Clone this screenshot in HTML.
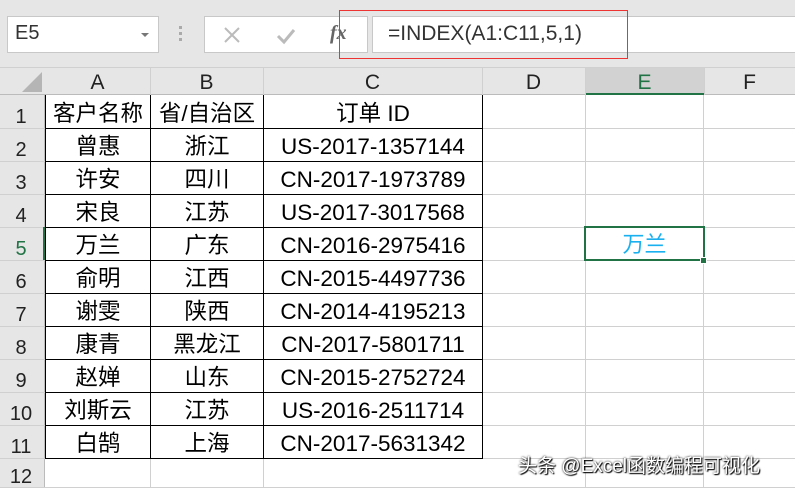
<!DOCTYPE html>
<html><head><meta charset="utf-8"><style>
*{margin:0;padding:0;box-sizing:border-box}
body{width:795px;height:488px;overflow:hidden;background:#fff;position:relative;font-family:"Liberation Sans","Noto Sans CJK SC",sans-serif}
.a{position:absolute}
.top{left:0;top:0;width:795px;height:68px;background:#e6e6e6;border-bottom:1px solid #d0d0d0}
.box{background:#fff;border:1px solid #c8c8c8}
.hl{background:#d0d0d0}
.vl{background:#d0d0d0}
.ch{color:#222;font-size:21px;text-align:center;top:71px}
.rh{color:#222;font-size:20px;left:0;width:42px;text-align:center}
td{padding-top:5px}
</style></head><body>
<div class="a top"></div>
<div class="a box" style="left:7px;top:16px;width:152px;height:37px"></div>
<div class="a" style="left:15px;top:22px;font-size:20px;color:#333">E5</div>
<div class="a" style="left:141px;top:33px;width:0;height:0;border-left:4px solid transparent;border-right:4px solid transparent;border-top:4px solid #777"></div>
<div class="a" style="left:179px;top:26px;width:3px;height:3px;background:#aaa;box-shadow:0 6px #aaa,0 12px #aaa"></div>
<div class="a box" style="left:204px;top:16px;width:164px;height:37px"></div>
<svg class="a" style="left:222px;top:25px" width="20" height="20"><path d="M3 3L17 17M17 3L3 17" stroke="#bbb" stroke-width="2"/></svg>
<svg class="a" style="left:275px;top:26px" width="22" height="20"><path d="M3 10L9 16L19 4" stroke="#bbb" stroke-width="3" fill="none"/></svg>
<div class="a" style="left:330px;top:22px;font:italic bold 20px 'Liberation Serif',serif;color:#666">fx</div>
<div class="a box" style="left:372px;top:16px;width:430px;height:37px"></div>
<div class="a" style="left:388px;top:22px;font-size:21px;color:#333">=INDEX(A1:C11,5,1)</div>
<div class="a" style="left:339px;top:10px;width:289px;height:49px;border:1px solid #e33"></div>
<div class="a" style="left:0;top:68px;width:795px;height:27px;background:#e6e6e6;border-bottom:1px solid #bbb"></div>
<div class="a" style="left:0;top:95px;width:45px;height:393px;background:#e6e6e6;border-right:1px solid #bbb"></div>
<svg class="a" style="left:22px;top:72px" width="20" height="20"><path d="M20 0L20 20L0 20Z" fill="#b5b5b5"/></svg>
<div class="a" style="left:585px;top:68px;width:119px;height:27px;background:#d2d2d2;border-bottom:2px solid #217346"></div>
<div class="a ch" style="left:45px;width:105px">A</div>
<div class="a ch" style="left:150px;width:113px">B</div>
<div class="a ch" style="left:263px;width:219px">C</div>
<div class="a ch" style="left:482px;width:103px">D</div>
<div class="a ch" style="left:585px;width:119px;color:#217346">E</div>
<div class="a ch" style="left:704px;width:91px">F</div>
<div class="a vl" style="left:150px;top:68px;width:1px;height:27px"></div>
<div class="a vl" style="left:263px;top:68px;width:1px;height:27px"></div>
<div class="a vl" style="left:482px;top:68px;width:1px;height:27px"></div>
<div class="a vl" style="left:585px;top:68px;width:1px;height:27px"></div>
<div class="a vl" style="left:704px;top:68px;width:1px;height:27px"></div>
<div class="a vl" style="left:585px;top:95px;width:1px;height:393px"></div>
<div class="a vl" style="left:703px;top:95px;width:1px;height:393px"></div>
<div class="a vl" style="left:150px;top:458px;width:1px;height:30px"></div>
<div class="a vl" style="left:263px;top:458px;width:1px;height:30px"></div>
<div class="a hl" style="left:0;top:128px;width:795px;height:1px"></div>
<div class="a hl" style="left:0;top:161px;width:795px;height:1px"></div>
<div class="a hl" style="left:0;top:194px;width:795px;height:1px"></div>
<div class="a hl" style="left:0;top:227px;width:795px;height:1px"></div>
<div class="a hl" style="left:0;top:260px;width:795px;height:1px"></div>
<div class="a hl" style="left:0;top:293px;width:795px;height:1px"></div>
<div class="a hl" style="left:0;top:326px;width:795px;height:1px"></div>
<div class="a hl" style="left:0;top:359px;width:795px;height:1px"></div>
<div class="a hl" style="left:0;top:392px;width:795px;height:1px"></div>
<div class="a hl" style="left:0;top:425px;width:795px;height:1px"></div>
<div class="a hl" style="left:0;top:458px;width:795px;height:1px"></div>
<div class="a hl" style="left:0;top:487px;width:795px;height:1px"></div>
<table class="a" style="left:45px;top:95px;border-collapse:collapse;background:#fff;table-layout:fixed;width:437px">
<colgroup><col style="width:105px"><col style="width:113px"><col style="width:219px"></colgroup>
<tbody style="font-size:22.5px;text-align:center;line-height:1">
<tr style="height:33px"><td style="border:1px solid #000;border-top:none">客户名称</td><td style="border:1px solid #000;border-top:none">省/自治区</td><td style="border:1px solid #000;border-top:none">订单 ID</td></tr>
<tr style="height:33px"><td style="border:1px solid #000">曾惠</td><td style="border:1px solid #000">浙江</td><td style="border:1px solid #000">US-2017-1357144</td></tr>
<tr style="height:33px"><td style="border:1px solid #000">许安</td><td style="border:1px solid #000">四川</td><td style="border:1px solid #000">CN-2017-1973789</td></tr>
<tr style="height:33px"><td style="border:1px solid #000">宋良</td><td style="border:1px solid #000">江苏</td><td style="border:1px solid #000">US-2017-3017568</td></tr>
<tr style="height:33px"><td style="border:1px solid #000">万兰</td><td style="border:1px solid #000">广东</td><td style="border:1px solid #000">CN-2016-2975416</td></tr>
<tr style="height:33px"><td style="border:1px solid #000">俞明</td><td style="border:1px solid #000">江西</td><td style="border:1px solid #000">CN-2015-4497736</td></tr>
<tr style="height:33px"><td style="border:1px solid #000">谢雯</td><td style="border:1px solid #000">陕西</td><td style="border:1px solid #000">CN-2014-4195213</td></tr>
<tr style="height:33px"><td style="border:1px solid #000">康青</td><td style="border:1px solid #000">黑龙江</td><td style="border:1px solid #000">CN-2017-5801711</td></tr>
<tr style="height:33px"><td style="border:1px solid #000">赵婵</td><td style="border:1px solid #000">山东</td><td style="border:1px solid #000">CN-2015-2752724</td></tr>
<tr style="height:33px"><td style="border:1px solid #000">刘斯云</td><td style="border:1px solid #000">江苏</td><td style="border:1px solid #000">US-2016-2511714</td></tr>
<tr style="height:33px"><td style="border:1px solid #000">白鹄</td><td style="border:1px solid #000">上海</td><td style="border:1px solid #000">CN-2017-5631342</td></tr>
</tbody></table>
<div class="a rh" style="top:106px">1</div>
<div class="a rh" style="top:139px">2</div>
<div class="a rh" style="top:172px">3</div>
<div class="a rh" style="top:205px">4</div>
<div class="a rh" style="top:238px;color:#217346">5</div>
<div class="a" style="left:43px;top:227px;width:2px;height:33px;background:#217346"></div>
<div class="a rh" style="top:271px">6</div>
<div class="a rh" style="top:304px">7</div>
<div class="a rh" style="top:337px">8</div>
<div class="a rh" style="top:370px">9</div>
<div class="a rh" style="top:403px">10</div>
<div class="a rh" style="top:436px">11</div>
<div class="a rh" style="top:466px">12</div>
<div class="a" style="left:584px;top:226px;width:121px;height:35px;border:2px solid #217346;background:#fff;color:#1ab0f0;font-size:22px;text-align:center;line-height:33px">万兰</div>
<div class="a" style="left:700px;top:257px;width:7px;height:7px;background:#217346;border:1px solid #fff"></div>
<div class="a" style="left:518px;top:451px;font-size:19px;color:#fff;text-shadow:0 0 2px #000,1px 1px 1px #000">头条 @Excel函数编程可视化</div>
</body></html>
